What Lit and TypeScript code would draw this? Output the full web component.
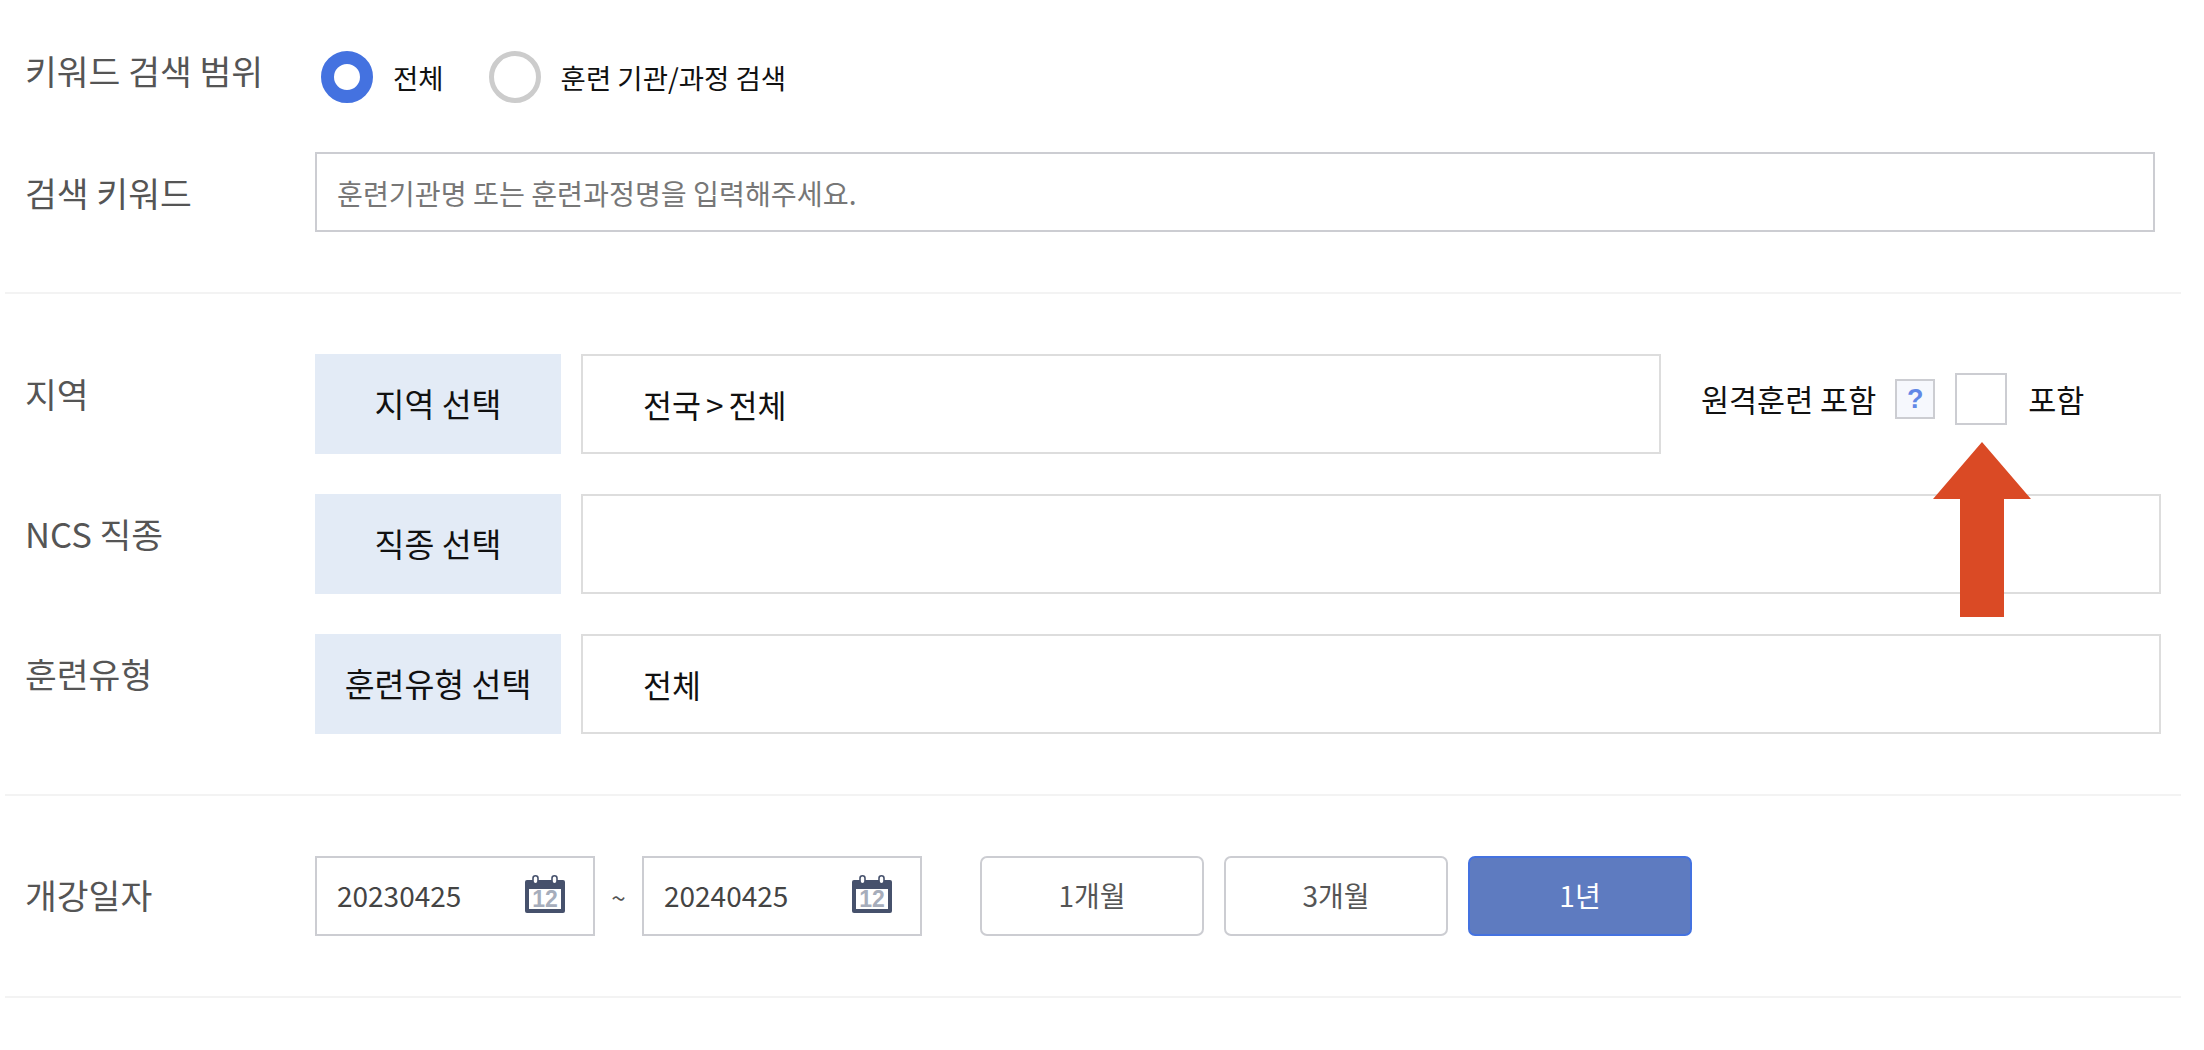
import { LitElement, html, css } from "lit";
import { customElement, property } from "lit/decorators.js";

const calendar = html`<svg class="cal" width="40" height="38" viewBox="0 0 40 38">
  <path d="M2 5h36a2 2 0 0 1 2 2v29a2 2 0 0 1-2 2H2a2 2 0 0 1-2-2V7a2 2 0 0 1 2-2z" fill="#46516c" />
  <rect x="4" y="14" width="32" height="20" fill="#fff" />
  <rect x="8" y="0.8" width="5" height="8" rx="2.5" fill="#fff" stroke="#46516c" stroke-width="1.6" />
  <rect x="27" y="0.8" width="5" height="8" rx="2.5" fill="#fff" stroke="#46516c" stroke-width="1.6" />
  <text x="20" y="32" text-anchor="middle" font-family="Liberation Sans Narrow, Liberation Sans, sans-serif" font-size="23" font-weight="700" fill="#a6adbb">12</text>
</svg>`;

@customElement("search-row")
class SearchRow extends LitElement {
  @property({ type: String }) label = "";
  @property({ type: String }) button = "";
  @property({ type: String }) value = "";
  @property({ type: Boolean }) short = false;

  static styles = css`
    :host {
      display: flex;
      align-items: center;
      height: 100px;
    }
    .label {
      width: 290px;
      margin-left: 20px;
      padding-bottom: 22px;
      font-size: 34.6px;
      color: #555;
    }
    .btn {
      width: 246px;
      height: 100px;
      line-height: 98px;
      margin-right: 20px;
      background: #e3ebf6;
      text-align: center;
      font-size: 32.5px;
      color: #111;
    }
    .box {
      box-sizing: border-box;
      flex: none;
      width: 1580px;
      height: 100px;
      line-height: 96px;
      border: 2px solid #dddddd;
      padding-left: 60px;
      font-size: 31.5px;
      word-spacing: -2px;
      color: #111;
    }
    .short {
      width: 1080px;
    }
  `;

  render() {
    return html`
      <div class="label">${this.label}</div>
      <div class="btn">${this.button}</div>
      <div class="box ${this.short ? "short" : ""}">${this.value}</div>
      <slot></slot>
    `;
  }
}

@customElement("app-root")
export default class AppRoot extends LitElement {
  static styles = css`
    :host {
      display: block;
      position: relative;
      width: 2204px;
      height: 1050px;
      background: #fff;
      font-family: "Noto Sans CJK KR", "Liberation Sans", sans-serif;
      overflow: hidden;
    }
    .wrap {
      width: 2176px;
      margin-left: 5px;
    }
    section {
      border-bottom: 2px solid #f3f3f3;
      padding: 60px 0;
    }
    .first {
      padding-top: 51px;
    }
    .stack {
      display: flex;
      flex-direction: column;
      gap: 40px;
    }
    .row {
      display: flex;
      align-items: center;
    }
    .label {
      width: 290px;
      margin-left: 20px;
      font-size: 34.6px;
      color: #555;
    }
    .scope {
      height: 52px;
      margin-bottom: 49px;
    }
    .scope .label {
      padding-bottom: 14px;
    }
    .dates .label {
      padding-bottom: 4px;
    }
    .radio {
      box-sizing: border-box;
      width: 52px;
      height: 52px;
      margin: 0 20px 0 6px;
      border-radius: 50%;
      border: 5px solid #cccccc;
    }
    .radio.on {
      border: 13px solid #4472e0;
    }
    .opt {
      font-size: 27.5px;
      color: #111;
      margin-right: 39px;
    }
    .keyword {
      box-sizing: border-box;
      width: 1840px;
      height: 80px;
      border: 2px solid #cccdd2;
      padding: 0 20px;
      font: inherit;
      font-size: 28.2px;
      outline: none;
    }
    .keyword::placeholder {
      color: #777;
      opacity: 1;
    }
    .remote {
      display: flex;
      align-items: center;
      margin-left: 40px;
      padding-bottom: 10px;
      font-size: 30.5px;
      color: #111;
    }
    .help {
      box-sizing: border-box;
      width: 40px;
      height: 40px;
      margin: 0 20px 0 19px;
      border: 2px solid #cccdd2;
      background: #f6f8fd;
      color: #6288e6;
      font-family: "Liberation Sans", sans-serif;
      font-size: 27px;
      font-weight: 700;
      line-height: 36px;
      text-align: center;
    }
    .check {
      box-sizing: border-box;
      width: 52px;
      height: 52px;
      margin-right: 21px;
      border: 2px solid #cccdd2;
    }
    .date {
      box-sizing: border-box;
      display: flex;
      align-items: center;
      justify-content: space-between;
      width: 280px;
      height: 80px;
      padding: 0 28px 0 20px;
      border: 2px solid #cccdd2;
      font-size: 28px;
      color: #444;
    }
    .date span {
      padding-bottom: 2px;
    }
    .cal {
      flex: none;
      margin-bottom: 4px;
    }
    .tilde {
      width: 47px;
      text-align: center;
      font-size: 26px;
      color: #555;
    }
    .range {
      box-sizing: border-box;
      width: 224px;
      height: 80px;
      line-height: 75px;
      margin-right: 20px;
      border: 2px solid #cccdd2;
      border-radius: 7px;
      text-align: center;
      font-size: 28px;
      color: #555;
    }
    .range.first-range {
      margin-left: 58px;
    }
    .range.on {
      background: #5e7bc0;
      border-color: #4472e0;
      color: #fff;
    }
    .arrow {
      position: absolute;
      left: 1933px;
      top: 442px;
    }
  `;

  render() {
    return html`
      <div class="wrap">
        <section class="first">
          <div class="row scope">
            <div class="label">키워드 검색 범위</div>
            <span class="radio on"></span>
            <span class="opt">전체</span>
            <span class="radio"></span>
            <span class="opt">훈련 기관/과정 검색</span>
          </div>
          <div class="row">
            <div class="label">검색 키워드</div>
            <input class="keyword" placeholder="훈련기관명 또는 훈련과정명을 입력해주세요." />
          </div>
        </section>
        <section class="stack">
          <search-row label="지역" button="지역 선택" value="전국 > 전체" short>
            <div class="remote">
              <span>원격훈련 포함</span>
              <span class="help">?</span>
              <span class="check"></span>
              <span>포함</span>
            </div>
          </search-row>
          <search-row label="NCS 직종" button="직종 선택"></search-row>
          <search-row label="훈련유형" button="훈련유형 선택" value="전체"></search-row>
        </section>
        <section>
          <div class="row dates">
            <div class="label">개강일자</div>
            <div class="date"><span>20230425</span>${calendar}</div>
            <span class="tilde">~</span>
            <div class="date"><span>20240425</span>${calendar}</div>
            <div class="range first-range">1개월</div>
            <div class="range">3개월</div>
            <div class="range on">1년</div>
          </div>
        </section>
      </div>
      <svg class="arrow" width="98" height="175" viewBox="0 0 98 175">
        <path d="M49 0L98 57H71V175H27V57H0z" fill="#da4a25" />
      </svg>
    `;
  }
}
